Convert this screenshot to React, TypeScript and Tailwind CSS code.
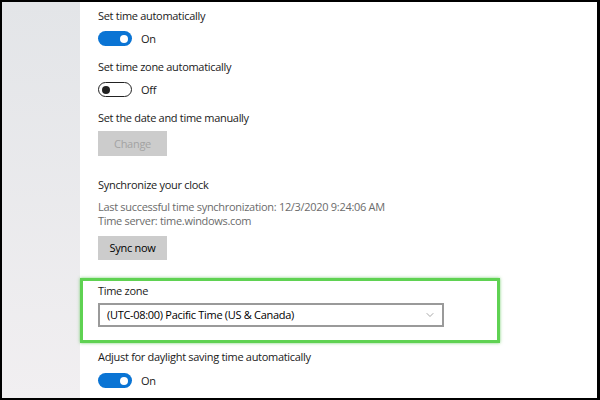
import { ChevronDown } from 'lucide-react';

function Toggle({ on }: { on: boolean }) {
  return (
    <div className="flex items-center h-[15px]">
      {on ? (
        <div className="w-[34px] h-[15px] rounded-full bg-[#0a74d4] flex items-center justify-end pr-[4px]">
          <div className="w-[8px] h-[8px] rounded-full bg-white" />
        </div>
      ) : (
        <div className="w-[34px] h-[15px] rounded-full border-[1.5px] border-[#222] flex items-center pl-[3px]">
          <div className="w-[8px] h-[8px] rounded-full bg-[#222]" />
        </div>
      )}
      <span className="ml-[9px] leading-[15px] text-[#1a1a1a]">{on ? 'On' : 'Off'}</span>
    </div>
  );
}

export default function App() {
  return (
    <div
      className="w-[600px] h-[400px] border-2 border-r-[3px] border-black flex overflow-hidden bg-white text-[11px] tracking-[-0.3px] text-[#1a1a1a]"
      style={{ fontFamily: '"Open Sans", "Noto Sans", sans-serif' }}
    >
      {/* sidebar */}
      <div className="w-[78px] shrink-0 bg-gradient-to-b from-[#e3e5e8] to-[#f1eff1]" />

      {/* content */}
      <div className="flex-1 flex flex-col pt-[6px]">
        <div className="ml-[18px] leading-[16px]">Set time automatically</div>
        <div className="ml-[18px] mt-[7px]">
          <Toggle on />
        </div>

        <div className="ml-[18px] mt-[13px] leading-[16px]">Set time zone automatically</div>
        <div className="ml-[18px] mt-[7px]">
          <Toggle on={false} />
        </div>

        <div className="ml-[18px] mt-[13px] leading-[16px]">Set the date and time manually</div>
        <button className="ml-[18px] mt-[5px] w-[69px] h-[25px] bg-[#cccccc] text-[#a3a3a3] leading-[25px] text-center">
          Change
        </button>

        <div className="ml-[18px] mt-[21px] leading-[16px]">Synchronize your clock</div>
        <div className="ml-[18px] mt-[7px] leading-[14px] text-[#6b6b6b]">
          <div>Last successful time synchronization: 12/3/2020 9:24:06 AM</div>
          <div>Time server: time.windows.com</div>
        </div>
        <button className="ml-[18px] mt-[8px] w-[69px] h-[24px] bg-[#cccccc] text-black leading-[24px] text-center">
          Sync now
        </button>

        {/* highlighted time zone box */}
        <div className="mt-[18px] w-[420px] border-[3px] border-[#5fd252] shadow-[0_0_3px_rgba(70,190,60,0.7)] pl-[15px] pt-[2px] pb-[13px]">
          <div className="leading-[16px]">Time zone</div>
          <div className="mt-[4px] w-[346px] h-[24px] border-2 border-[#9a9a9a] flex items-center justify-between pl-[7px] pr-[6px]">
            <span className="text-black">(UTC-08:00) Pacific Time (US &amp; Canada)</span>
            <ChevronDown className="w-[12px] h-[12px] text-[#8a8a8a]" strokeWidth={1.5} />
          </div>
        </div>

        <div className="ml-[18px] mt-[6px] leading-[16px]">Adjust for daylight saving time automatically</div>
        <div className="ml-[18px] mt-[8px]">
          <Toggle on />
        </div>
      </div>
    </div>
  );
}
